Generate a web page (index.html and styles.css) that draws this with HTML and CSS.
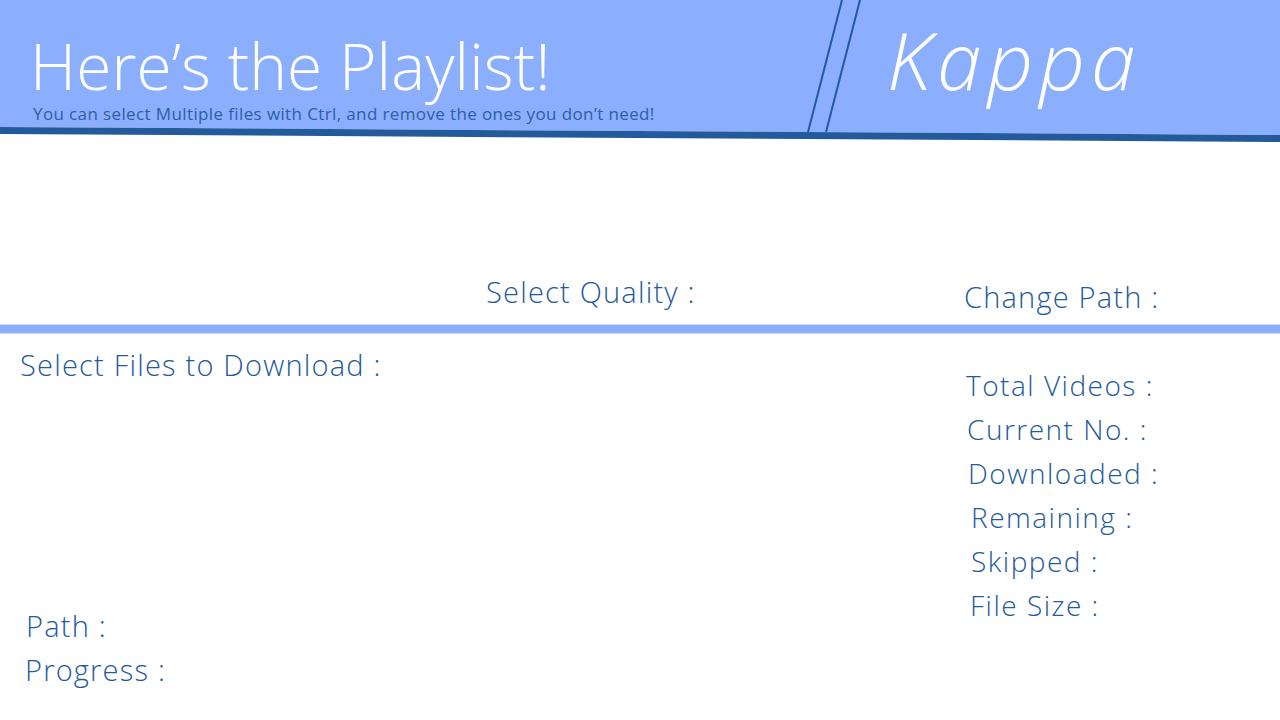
FILE: index.html
```html
<!DOCTYPE html>
<html>
<head>
<meta charset="utf-8">
<link rel="stylesheet" href="styles.css">
</head>
<body>
<div class="page">
  <header class="header">
    <svg class="header-bg" viewBox="0 0 1280 142" preserveAspectRatio="none" aria-hidden="true">
      <polygon points="0,0 1280,0 1280,135 0,127" fill="#8caffd"/>
      <polygon points="0,127 1280,135 1280,142 0,134" fill="#235a9b"/>
      <line x1="808" y1="132" x2="842" y2="0" stroke="#235a9b" stroke-width="2"/>
      <line x1="826" y1="132" x2="860" y2="0" stroke="#235a9b" stroke-width="2"/>
    </svg>
    <div class="title-block">
      <h1 class="title">Here’s the Playlist!</h1>
      <p class="subtitle">You can select Multiple files with Ctrl, and remove the ones you don’t need!</p>
    </div>
    <div class="brand">Kappa</div>
  </header>

  <section class="controls">
    <div class="label quality">Select Quality :</div>
    <div class="label change-path">Change Path :</div>
  </section>

  <div class="band"></div>

  <section class="lower">
    <div class="files-col">
      <div class="label">Select Files to Download :</div>
      <div class="bottom-info">
        <div class="label path">Path :</div>
        <div class="label">Progress :</div>
      </div>
    </div>
    <ul class="stats">
      <li class="label stat s1">Total Videos :</li>
      <li class="label stat s2">Current No. :</li>
      <li class="label stat s3">Downloaded :</li>
      <li class="label stat s4">Remaining :</li>
      <li class="label stat s5">Skipped :</li>
      <li class="label stat s6">File Size :</li>
    </ul>
  </section>
</div>
</body>
</html>
```
FILE: styles.css
```css
html, body {
  margin: 0;
  padding: 0;
  background: #ffffff;
}
.page {
  width: 1280px;
  height: 720px;
  overflow: hidden;
  font-family: "Open Sans", "Noto Sans", sans-serif;
  color: #245a9b;
  display: flex;
  flex-direction: column;
}
.header {
  position: relative;
  height: 142px;
  flex: none;
  display: flex;
}
.header-bg {
  position: absolute;
  left: 0;
  top: 0;
  width: 1280px;
  height: 142px;
}
.title-block {
  position: relative;
  width: 858px;
  padding-left: 30px;
  padding-top: 38px;
  box-sizing: border-box;
}
.title {
  margin: 0;
  font-size: 64px;
  line-height: 56px;
  font-weight: 300;
  color: #ffffff;
  letter-spacing: 0.1px;
}
.subtitle {
  margin: 10px 0 0 3px;
  font-size: 17px;
  line-height: 20px;
  font-weight: 400;
  color: #2f5ea3;
  letter-spacing: 0.38px;
}
.brand {
  position: relative;
  padding-left: 29px;
  padding-top: 9px;
  font-size: 80px;
  line-height: 100px;
  font-style: italic;
  font-weight: 300;
  color: #ffffff;
  letter-spacing: 6px;
}
.label {
  font-size: 29px;
  line-height: 44px;
  font-weight: 300;
  letter-spacing: 1.2px;
}
.controls {
  height: 182px;
  flex: none;
  box-sizing: border-box;
  display: grid;
  grid-template-columns: 478px 1fr;
  align-items: end;
  padding-left: 486px;
  padding-bottom: 5px;
}
.quality {
  margin-bottom: 5px;
}
.band {
  flex: none;
  height: 8px;
  background: #8caffd;
  border-top: 1px solid #c9d9fe;
  border-bottom: 1px solid #c9d9fe;
}
.lower {
  flex: 1;
  display: grid;
  grid-template-columns: 966px 1fr;
}
.files-col {
  display: flex;
  flex-direction: column;
  justify-content: space-between;
  padding: 9px 0 28px 20px;
}
.bottom-info {
  padding-left: 5px;
}
.path {
  margin-left: 1px;
}
.stats {
  list-style: none;
  margin: 0;
  padding: 29px 0 0 0;
}
.stat {
  font-size: 28px;
  letter-spacing: 1.5px;
}
.s2 { margin-left: 1px; }
.s3 { margin-left: 2px; }
.s4 { margin-left: 5px; }
.s5 { margin-left: 5px; }
.s6 { margin-left: 4px; }
```
